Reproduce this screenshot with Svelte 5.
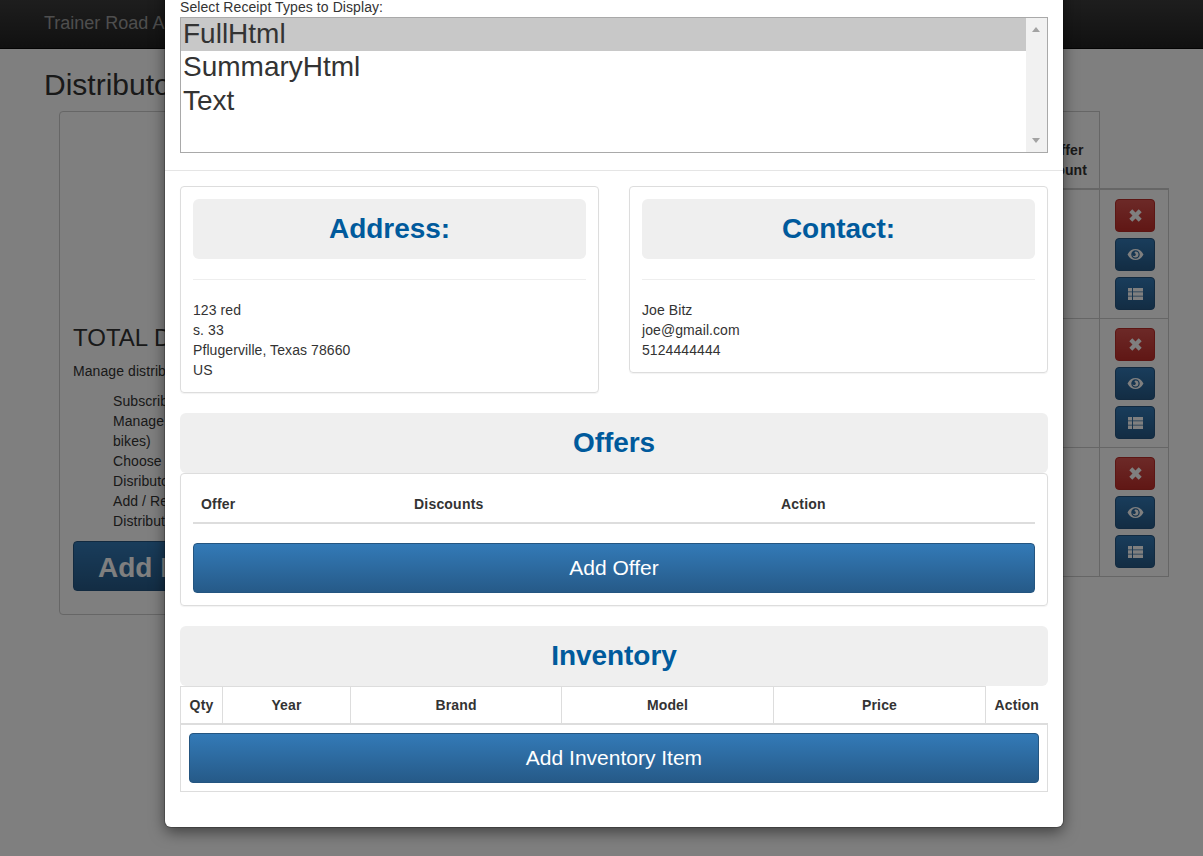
<script>
  const receiptTypes = ["FullHtml", "SummaryHtml", "Text"];
  const bullets = [
    "Subscribe to feeds",
    "Manage inventory of items (add / remove bikes)",
    "Choose offers",
    "Disributor receipts",
    "Add / Remove discounts",
    "Distributor contacts"
  ];
  const rows = [
    { name: "Bike World", contact: "Joe Bitz", offers: 2 },
    { name: "Austin Cycles", contact: "Ann Lee", offers: 1 },
    { name: "Pedal Shop", contact: "Tom Ray", offers: 0 }
  ];
  const address = ["123 red", "s. 33", "Pflugerville, Texas 78660", "US"];
  const contact = ["Joe Bitz", "joe@gmail.com", "5124444444"];
</script>

<div class="page">
  <nav class="navbar"><span class="brand">Trainer Road Admin</span></nav>

  <main class="content">
    <h1>Distributors</h1>
    <div class="columns">
      <aside class="side">
        <h2>TOTAL DISTRIBUTORS</h2>
        <p>Manage distributors here</p>
        <ul>
          {#each bullets as b}
            <li>{b}</li>
          {/each}
        </ul>
        <button class="btn primary add">Add Distributor</button>
      </aside>

      <table class="dist">
        <thead>
          <tr>
            <th>Name</th>
            <th>Contact</th>
            <th class="count">Offer Count</th>
            <th class="action"></th>
          </tr>
        </thead>
        <tbody>
          {#each rows as row}
            <tr>
              <td>{row.name}</td>
              <td>{row.contact}</td>
              <td>{row.offers}</td>
              <td class="action">
                <div class="actions">
                  <button class="btn danger icon" aria-label="Delete">
                    <svg width="15" height="15" viewBox="0 0 14 14"><path d="M4 1.200 7 4.200 10 1.200 12.800 4 9.800 7 12.800 10 10 12.800 7 9.800 4 12.800 1.200 10 4.200 7 1.200 4Z" fill="currentColor"/></svg>
                  </button>
                  <button class="btn primary icon" aria-label="View">
                    <svg width="17" height="15" viewBox="0 0 16 14"><path fill-rule="evenodd" d="M0.500 7C2.300 3.400 5 1.800 8 1.800S13.700 3.400 15.500 7C13.700 10.600 11 12.200 8 12.200S2.300 10.600 0.500 7ZM8 3A4 4 0 1 0 8 11 4 4 0 0 0 8 3Z" fill="currentColor"/><path d="M8 4.200A2.800 2.800 0 1 1 5.200 7C5.400 7.900 6.100 8.500 6.900 8.500S8.300 7.800 8.300 7C8.300 6.200 7.800 5.600 7 5.500 7.200 4.800 7.500 4.300 8 4.200Z" fill="currentColor"/></svg>
                  </button>
                  <button class="btn primary icon" aria-label="Inventory">
                    <svg width="15" height="14" viewBox="0 0 15 14"><path d="M0 1H4V4.600H0ZM5 1H15V4.600H5ZM0 5.300H4V8.700H0ZM5 5.300H15V8.700H5ZM0 9.400H4V13H0ZM5 9.400H15V13H5Z" fill="currentColor"/></svg>
                  </button>
                </div>
              </td>
            </tr>
          {/each}
        </tbody>
      </table>
    </div>
  </main>

  <div class="backdrop"></div>

  <div class="modal">
    <section class="top">
      <label for="types">Select Receipt Types to Display:</label>
      <div class="listbox" id="types" role="listbox">
        <div class="options">
          {#each receiptTypes as t, i}
            <div class="option" class:selected={i === 0}>{t}</div>
          {/each}
        </div>
        <div class="scrollbar">
          <span class="up"></span>
          <span class="down"></span>
        </div>
      </div>
    </section>

    <section class="body">
      <div class="pair">
        <div class="card">
          <h3 class="head">Address:</h3>
          <hr />
          {#each address as line}
            <div>{line}</div>
          {/each}
        </div>
        <div class="card">
          <h3 class="head">Contact:</h3>
          <hr />
          {#each contact as line}
            <div>{line}</div>
          {/each}
        </div>
      </div>

      <h3 class="head">Offers</h3>
      <div class="card offers">
        <table class="offer-table">
          <thead>
            <tr>
              <th class="c-offer">Offer</th>
              <th class="c-disc">Discounts</th>
              <th>Action</th>
            </tr>
          </thead>
        </table>
        <button class="btn primary wide">Add Offer</button>
      </div>

      <h3 class="head">Inventory</h3>
      <table class="inv">
        <thead>
          <tr>
            <th class="q">Qty</th>
            <th class="y">Year</th>
            <th class="b">Brand</th>
            <th class="m">Model</th>
            <th class="m">Price</th>
            <th class="a">Action</th>
          </tr>
        </thead>
        <tbody>
          <tr>
            <td colspan="6"><button class="btn primary wide">Add Inventory Item</button></td>
          </tr>
        </tbody>
      </table>
    </section>
  </div>
</div>

<style>
  :global(body) {
    overflow: hidden;
    background: #fff;
    font-family: "Liberation Sans", Arial, sans-serif;
    font-size: 14px;
    line-height: 20px;
    letter-spacing: 0.08px;
    color: #333;
  }

  .page {
    position: relative;
    height: 856px;
    overflow: hidden;
  }

  .navbar {
    height: 48px;
    border-bottom: 1px solid #080808;
    background: linear-gradient(#3c3c3c, #222);
    padding-left: 44px;
    line-height: 46px;
  }

  .brand {
    font-size: 18px;
    color: #9d9d9d;
    letter-spacing: 0;
  }

  .content {
    padding: 0 34px 0 44px;
  }

  h1 {
    margin: 19px 0 16px;
    font-size: 30px;
    font-weight: 400;
    line-height: 33px;
    height: 27px;
    letter-spacing: 0;
  }

  .columns {
    display: flex;
    margin-left: 15px;
  }

  .side {
    width: 340px;
    flex: none;
    height: 504px;
    box-sizing: border-box;
    border: 1px solid #ccc;
    border-radius: 4px;
    padding: 211px 13px 0;
  }

  .side h2 {
    margin: 0 0 8px;
    font-size: 24px;
    font-weight: 400;
    line-height: 30px;
    white-space: nowrap;
    letter-spacing: 0;
  }

  .side p {
    margin: 0 0 10px;
  }

  .side ul {
    list-style: none;
    margin: 0 0 10px;
    padding: 0 0 0 40px;
  }

  .dist {
    flex: 1;
    margin-left: 0;
    border-collapse: collapse;
    align-self: flex-start;
  }

  .dist th {
    height: 60px;
    padding: 8px;
    border: 1px solid #ccc;
    border-bottom: 2px solid #ccc;
    vertical-align: bottom;
    text-align: center;
  }

  .dist th.count {
    width: 49px;
  }

  .dist th.action {
    width: 39px;
    border: 0;
    border-bottom: 2px solid #ccc;
  }

  .dist td {
    border: 1px solid #ccc;
    padding: 8px;
    vertical-align: top;
  }

  .dist td.action {
    padding: 9px 13px 8px 15px;
  }

  .actions {
    display: flex;
    flex-direction: column;
    gap: 6px;
  }

  .btn {
    display: block;
    box-sizing: border-box;
    border: 1px solid #245580;
    border-radius: 4px;
    color: #fff;
    font-family: inherit;
    padding: 0;
  }

  .btn.add {
    height: 50px;
    font-size: 28px;
    font-weight: 700;
    padding: 3px 24px 0;
  }

  .primary {
    background: linear-gradient(#337ab7, #265a88);
  }

  .danger {
    background: linear-gradient(#d9534f, #c12e2a);
    border-color: #b92c28;
  }

  .icon {
    width: 40px;
    height: 33px;
    display: flex;
    align-items: center;
    justify-content: center;
  }

  .backdrop {
    position: absolute;
    inset: 0;
    background: rgba(0, 0, 0, 0.5);
  }

  .modal {
    position: absolute;
    left: 165px;
    top: -18px;
    width: 898px;
    box-sizing: border-box;
    background: #fff;
    border-radius: 6px;
    box-shadow: 0 0 0 1px rgba(0, 0, 0, 0.2), 0 5px 15px rgba(0, 0, 0, 0.5);
  }

  .top {
    padding: 15px 15px 17px;
  }

  label {
    display: block;
  }

  .listbox {
    display: flex;
    height: 136px;
    box-sizing: border-box;
    border: 1px solid #a9a9a9;
  }

  .options {
    flex: 1;
    font-size: 28px;
    letter-spacing: 0;
  }

  .option {
    height: 33.400px;
    line-height: 32px;
    padding-left: 2px;
  }

  .selected {
    background: #c8c8c8;
  }

  .scrollbar {
    width: 21px;
    background: #f1f1f1;
    position: relative;
  }

  .up,
  .down {
    position: absolute;
    left: 6px;
    width: 0;
    height: 0;
    border-left: 4.500px solid transparent;
    border-right: 4.500px solid transparent;
  }

  .up {
    top: 9px;
    border-bottom: 5px solid #a3a3a3;
  }

  .down {
    bottom: 9px;
    border-top: 5px solid #a3a3a3;
  }

  .body {
    border-top: 1px solid #e5e5e5;
    padding: 15px 15px 35px;
  }

  .pair {
    display: grid;
    grid-template-columns: 419px 419px;
    gap: 30px;
    align-items: start;
  }

  .card {
    border: 1px solid #ddd;
    border-radius: 4px;
    padding: 12px;
    margin-bottom: 20px;
    box-shadow: 0 1px 1px rgba(0, 0, 0, 0.05);
  }

  .head {
    margin: 0;
    height: 60px;
    background: #efefef;
    border-radius: 6px;
    color: #005a9c;
    font-size: 28px;
    font-weight: 700;
    line-height: 60px;
    text-align: center;
    letter-spacing: -0.05px;
  }

  hr {
    margin: 20px 0;
    border: 0;
    border-top: 1px solid #eee;
  }

  .offer-table {
    width: 100%;
    table-layout: fixed;
    border-collapse: collapse;
    margin-bottom: 19px;
  }

  .offer-table th {
    padding: 8px;
    text-align: left;
    border-bottom: 2px solid #ddd;
    letter-spacing: 0.2px;
  }

  .c-offer {
    width: 197px;
  }

  .c-disc {
    width: 351px;
  }

  .wide {
    width: 100%;
    height: 50px;
    font-size: 21px;
    letter-spacing: 0;
  }

  .inv {
    width: 868px;
    table-layout: fixed;
    border-collapse: collapse;
  }

  .inv th {
    height: 34px;
    padding: 1px 0;
    border: 1px solid #ddd;
    border-bottom: 2px solid #ddd;
    text-align: center;
    letter-spacing: 0.15px;
  }

  .inv .q { width: 41px; }
  .inv .y { width: 127px; }
  .inv .b { width: 210px; }
  .inv .m { width: 211px; }

  .inv th.a {
    border-top: 0;
    border-right: 0;
    padding: 1px 0 0;
  }

  .inv td {
    border: 1px solid #ddd;
    padding: 8px;
  }
</style>
